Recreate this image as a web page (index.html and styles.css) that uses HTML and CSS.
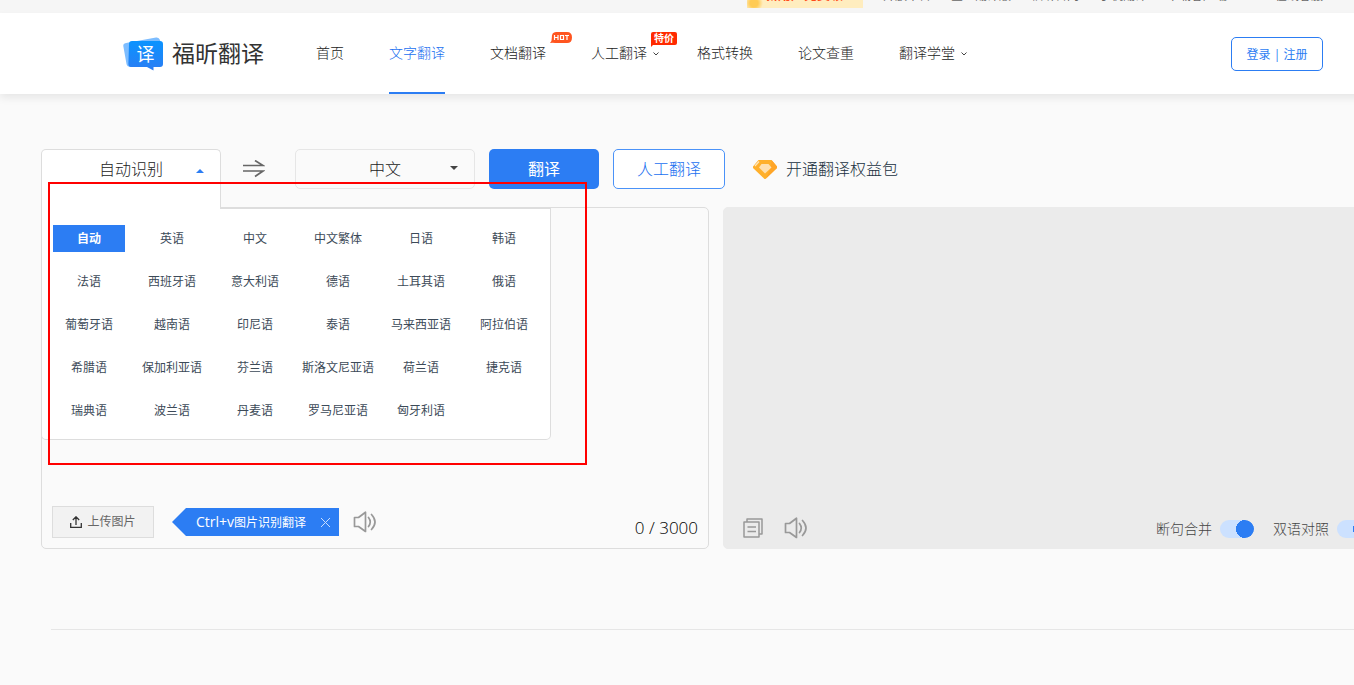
FILE: index.html
```html
<!DOCTYPE html>
<html lang="zh-CN">
<head>
<meta charset="utf-8">
<title>福昕翻译</title>
<link rel="stylesheet" href="styles.css">
</head>
<body>
<div class="topbar">
  <div class="container topbar-inner">
    <a class="promo" href="#">新用户免费领</a>
    <a href="#">开放平台</a>
    <a href="#">企业翻译版</a>
    <a href="#">福昕官网</a>
    <a href="#">手机翻译</a>
    <a class="top-app" href="#">下载客户端</a>
    <a href="#">在线客服</a>
  </div>
</div>
<header class="header">
  <div class="container header-inner">
    <a class="logo" href="#">
      <svg class="logo-mark" viewBox="0 0 42 34" aria-hidden="true">
        <defs><linearGradient id="lg" x1="0" y1="0" x2="0" y2="1"><stop offset="0" stop-color="#0a93ff"/><stop offset="1" stop-color="#2b7df3"/></linearGradient></defs>
        <path d="M3 6 L33 .5 Q36 0 37 3 L38 8 L8 30 Q4 30 3.500 27 L.3 9 Q0 6.500 3 6Z" fill="#7dbdff"/>
        <path d="M9 4H37Q40 4 40 7V27Q40 30 37 30H30.500V33.500L24 30H8Q5.500 30 5.400 27L6 7Q6 4 9 4Z" fill="url(#lg)"/>
        <text class="logo-char" x="22.500" y="24" text-anchor="middle">译</text>
      </svg>
      <span class="logo-name">福昕翻译</span>
    </a>
    <nav class="nav">
      <a href="#">首页</a>
      <a class="active" href="#">文字翻译</a>
      <a href="#">文档翻译
        <svg class="badge badge-hot" viewBox="0 0 22 12" aria-hidden="true"><path d="M6 0H17Q22 0 22 5.500Q22 11 17 11H5Q3 10.500 0 11Q2 9 1.800 6Q1.500 0 6 0Z" fill="#ff5520"/><path d="M4.500 3V8M4.500 5.500H8M8 3V8M10.500 3.500H13.500V7.500H10.500ZM15 3.500H19M17 3.500V8" fill="none" stroke="#fff" stroke-width="1.200"/></svg>
      </a>
      <a class="has-menu" href="#">人工翻译<span class="badge badge-sale">特价</span>
        <svg class="chevron" viewBox="0 0 6 4" aria-hidden="true"><path d="M.5 .5L3 3L5.500 .5" fill="none" stroke="#444"/></svg>
      </a>
      <a href="#">格式转换</a>
      <a href="#">论文查重</a>
      <a class="has-menu" href="#">翻译学堂
        <svg class="chevron" viewBox="0 0 6 4" aria-hidden="true"><path d="M.5 .5L3 3L5.500 .5" fill="none" stroke="#444"/></svg>
      </a>
    </nav>
    <a class="login" href="#">登录 | 注册</a>
  </div>
</header>

<main class="main">
  <div class="toolbar">
    <div class="picker">
      <button class="picker-button" type="button" aria-expanded="true" aria-controls="languages">自动识别
        <svg class="caret" viewBox="0 0 8 4" aria-hidden="true"><path d="M0 4L4 0L8 4Z" fill="#2c7df3"/></svg>
      </button>
      <div class="language-menu" id="languages">
        <button class="selected" type="button">自动</button><button type="button">英语</button><button type="button">中文</button><button type="button">中文繁体</button><button type="button">日语</button><button type="button">韩语</button>
        <button type="button">法语</button><button type="button">西班牙语</button><button type="button">意大利语</button><button type="button">德语</button><button type="button">土耳其语</button><button type="button">俄语</button>
        <button type="button">葡萄牙语</button><button type="button">越南语</button><button type="button">印尼语</button><button type="button">泰语</button><button type="button">马来西亚语</button><button type="button">阿拉伯语</button>
        <button type="button">希腊语</button><button type="button">保加利亚语</button><button type="button">芬兰语</button><button type="button">斯洛文尼亚语</button><button type="button">荷兰语</button><button type="button">捷克语</button>
        <button type="button">瑞典语</button><button type="button">波兰语</button><button type="button">丹麦语</button><button type="button">罗马尼亚语</button><button type="button">匈牙利语</button>
      </div>
    </div>
    <button class="swap" type="button" aria-label="交换语言">
      <svg viewBox="0 0 22 18" aria-hidden="true"><path d="M0 5.500H20L12 .5M0 11H20L12 16.500" fill="none" stroke="#666" stroke-width="1.700"/></svg>
    </button>
    <div class="select-wrap">
      <select class="target" aria-label="目标语言"><option>中文</option><option>英语</option></select>
      <svg class="caret" viewBox="0 0 8 4" aria-hidden="true"><path d="M0 0L4 4L8 0Z" fill="#444"/></svg>
    </div>
    <button class="btn btn-primary" type="button">翻译</button>
    <button class="btn btn-outline" type="button">人工翻译</button>
    <a class="vip" href="#">
      <svg class="gem" viewBox="0 0 24 19" aria-hidden="true"><path d="M5.500 0H18.500L24 6.500V8L13 18.500Q12 19.500 11 18.500L0 8V6.500Z" fill="#ffb02c"/><path d="M18.500 0L24 6.500V8L13 18.500L18 7Z" fill="#ffa528"/><path d="M8.500 4H15.500L18.500 7.500L12 13.500L6 7.500Z" fill="#ffe0b0"/><path d="M2 6L6 1.500" stroke="#ffe7bc" stroke-width="1.200"/></svg>
      开通翻译权益包
    </a>
  </div>

  <div class="panels">
    <section class="panel source" aria-label="原文">
      <div class="source-tools">
        <button class="upload" type="button">
          <svg viewBox="0 0 12 12" aria-hidden="true"><path d="M.7 7V11.300H11.300V7M6 9V1M2.800 4L6 .8L9.200 4" fill="none" stroke="#333" stroke-width="1.300"/></svg>上传图片
        </button>
        <div class="tip"><span><span class="tip-key">Ctrl+v</span>图片识别翻译</span>
          <button class="tip-close" type="button" aria-label="关闭"><svg viewBox="0 0 9 9" aria-hidden="true"><path d="M0 0L9 9M9 0L0 9" stroke="#c8defd"/></svg></button>
        </div>
        <button class="icon-button" type="button" aria-label="朗读原文">
          <svg class="speaker" viewBox="0 0 24 22" aria-hidden="true"><path d="M1.500 6.500H5.500L12.500 1.200V20.500L5.500 15.500H1.500ZM15.500 6.500Q19 11 15.500 15.500M18.500 3.500Q25.500 11 18.500 18.500" fill="none" stroke="#999" stroke-width="1.700" stroke-linejoin="round" stroke-linecap="round"/></svg>
        </button>
      </div>
      <div class="counter">0 / 3000</div>
    </section>
    <section class="panel result" aria-label="译文">
      <div class="result-tools">
        <button class="icon-button" type="button" aria-label="复制">
          <svg class="copy" viewBox="0 0 20 20" aria-hidden="true"><path d="M4 3.500V1H19V16H16.500M1 4H16V19H1ZM4.500 9H13M4.500 13.500H13" fill="none" stroke="#999" stroke-width="1.500" stroke-linejoin="round"/></svg>
        </button>
        <button class="icon-button" type="button" aria-label="朗读译文">
          <svg class="speaker" viewBox="0 0 24 22" aria-hidden="true"><path d="M1.500 6.500H5.500L12.500 1.200V20.500L5.500 15.500H1.500ZM15.500 6.500Q19 11 15.500 15.500M18.500 3.500Q25.500 11 18.500 18.500" fill="none" stroke="#999" stroke-width="1.700" stroke-linejoin="round" stroke-linecap="round"/></svg>
        </button>
      </div>
      <div class="switches">
        <label>断句合并<input class="switch" type="checkbox" checked></label>
        <label>双语对照<input class="switch" type="checkbox" checked></label>
      </div>
    </section>
  </div>
  <hr class="divider">
  <div class="highlight"></div>
</main>
</body>
</html>
```
FILE: styles.css
```css
* { box-sizing: border-box; }
html { overflow: hidden; background: #fafafa; }
body {
  margin: 0;
  min-width: 1446px;
  font: 300 14px/20px "Open Sans", "Noto Sans CJK SC", sans-serif;
  color: #222;
}
a { color: inherit; text-decoration: none; }
button, select { font: inherit; color: inherit; margin: 0; padding: 0; border: 0; background: none; }
svg { display: block; }
.container { width: 1200px; margin: 0 auto; }

/* Top strip, scrolled most of the way out of view */
.topbar { height: 34px; margin-top: -21px; background: #f6f6f6; font-size: 12px; font-weight: 400; color: #666; }
.topbar-inner { display: flex; justify-content: flex-end; align-items: center; gap: 20px; height: 34px; }
.promo {
  align-self: stretch;
  width: 116px;
  height: 29px;
  padding-left: 18px;
  line-height: 30px;
  font-size: 13px;
  font-weight: 700;
  color: #ff4b1a;
  background: radial-gradient(circle at 7px 24px, #ffcb55 4px, transparent 9px), #ffedbf;
}
.top-app { margin-right: 28px; }

.header { position: relative; background: #fff; box-shadow: 0 4px 8px rgba(0, 0, 0, .08); }
.header-inner { display: flex; align-items: center; height: 81px; }
.logo { display: flex; align-items: center; gap: 7px; }
.logo-mark { width: 42px; height: 34px; }
.logo-char { font-size: 18px; font-weight: 400; fill: #fff; }
.logo-name { font-size: 23px; line-height: 32px; padding-bottom: 2px; font-weight: 400; color: #333; }
.nav { display: flex; gap: 45px; margin-left: 52px; flex: 1; }
.nav a { position: relative; height: 81px; line-height: 80px; white-space: nowrap; }
.nav .has-menu { padding-right: 5px; }
.nav .active { color: #1a70f0; box-shadow: inset 0 -2px #2c7df3; }
.chevron { position: absolute; right: -7px; top: 39px; width: 6px; height: 4px; }
.badge { position: absolute; }
.badge-hot { left: 60px; top: 19px; width: 22px; height: 12px; }
.nav .badge-sale {
  left: 60px;
  top: 19px;
  width: 26px;
  height: 13px;
  border-radius: 2px 2px 2px 0;
  background: #ff2a00;
  color: #fff;
  font-size: 10px;
  line-height: 13px;
  font-weight: 700;
  text-align: center;
}
.badge-sale::after { content: ""; position: absolute; left: 0; top: 12px; border: solid transparent; border-width: 0 3px 3px 0; border-top: 3px solid #ff2a00; border-bottom: 0; }
.login {
  width: 92px;
  height: 34px;
  border: 1px solid #2c7df3;
  border-radius: 5px;
  color: #2c7df3;
  font-size: 12px;
  font-weight: 400;
  line-height: 34px;
  text-align: center;
}

.main { position: relative; padding: 55px 41px; }
.toolbar { display: flex; align-items: center; height: 40px; font-size: 16px; }
.picker { position: relative; width: 180px; height: 40px; z-index: 2; }
.picker-button {
  position: relative;
  z-index: 2;
  width: 180px;
  height: 60px;
  padding-bottom: 22px;
  border: 1px solid #ddd;
  border-bottom: 0;
  border-radius: 5px 5px 0 0;
  background: #fff;
}
.caret { position: absolute; right: 17px; width: 8px; height: 4px; pointer-events: none; top: 17px; }
.picker-button .caret { right: 16px; top: 19px; }
.language-menu {
  position: absolute;
  z-index: 1;
  left: 0;
  top: 58px;
  display: grid;
  grid-template-columns: repeat(6, 72px);
  gap: 16px 11px;
  padding: 16px 10px 15px 11px;
  border: 1px solid #ddd;
  border-top-width: 2px;
  border-radius: 0 0 5px 5px;
  background: #fff;
  font-size: 12px;
  font-weight: 400;
  color: #3c4a58;
}
.language-menu button { height: 27px; line-height: 27px; white-space: nowrap; }
.language-menu .selected { background: #2c7df3; color: #fff; font-weight: 700; }
.swap { margin: 0 30px 0 22px; }
.swap svg { width: 22px; height: 18px; }
.select-wrap { position: relative; margin-right: 14px; }
.target {
  appearance: none;
  width: 180px;
  height: 40px;
  border: 1px solid #e6e6e6;
  border-radius: 5px;
  text-align-last: center;
}
.btn { height: 40px; border-radius: 5px; margin-right: 14px; }
.btn-primary { width: 110px; background: #2c7df3; color: #fff; font-weight: 400; }
.btn-outline { width: 112px; margin-right: 28px; border: 1px solid #4a92f8; background: #fff; color: #1a70f0; }
.vip { display: flex; align-items: center; gap: 9px; color: #203040; }
.gem { width: 24px; height: 19px; }

.panels { display: flex; gap: 14px; margin-top: 18px; }
.panel { display: flex; align-items: flex-end; justify-content: space-between; height: 342px; border: 1px solid #ddd; border-radius: 5px; }
.source { width: 668px; padding: 10px; }
.source-tools { display: flex; align-items: center; }
.upload {
  display: flex;
  align-items: center;
  justify-content: center;
  gap: 5px;
  width: 102px;
  height: 32px;
  border: 1px solid #ddd;
  background: #f2f2f2;
  font-size: 12px;
  font-weight: 400;
  line-height: 32px;
  color: #666;
}
.upload svg { width: 12px; height: 12px; }
.tip {
  display: flex;
  align-items: center;
  justify-content: space-between;
  width: 167px;
  height: 28px;
  margin: 0 14px 0 18px;
  padding: 0 9px 0 24px;
  background: #2c7df3;
  color: #fff;
  font-size: 12px;
  font-weight: 400;
  clip-path: polygon(0 50%, 14px 0, 100% 0, 100% 100%, 14px 100%);
}
.tip-key { font-size: 14px; }
.tip svg { width: 9px; height: 9px; }
.speaker { width: 24px; height: 22px; }
.counter { font-size: 17px; color: #000; }
.result { flex: 1; padding: 9px 33px 9px 19px; border-color: #ebebeb; background: #ebebeb; }
.result-tools { display: flex; align-items: center; gap: 21px; }
.copy { width: 20px; height: 20px; }
.switches { display: flex; gap: 19px; color: #444; }
.switches label { display: flex; align-items: center; gap: 8px; }
.switch {
  appearance: none;
  width: 34px;
  height: 18px;
  margin: 0;
  border-radius: 9px;
  background: radial-gradient(circle at 25px 9px, #2c7df3 9px, transparent 9px), #cce1ff;
}
.divider { height: 1px; margin: 80px 0 0 10px; border: 0; background: #e6e6e6; }

/* Call-out frame laid over the open language menu */
.highlight {
  position: absolute;
  z-index: 3;
  left: 48px;
  top: 88px;
  width: 539px;
  height: 283px;
  border: 2px solid #f00;
  pointer-events: none;
}
```
